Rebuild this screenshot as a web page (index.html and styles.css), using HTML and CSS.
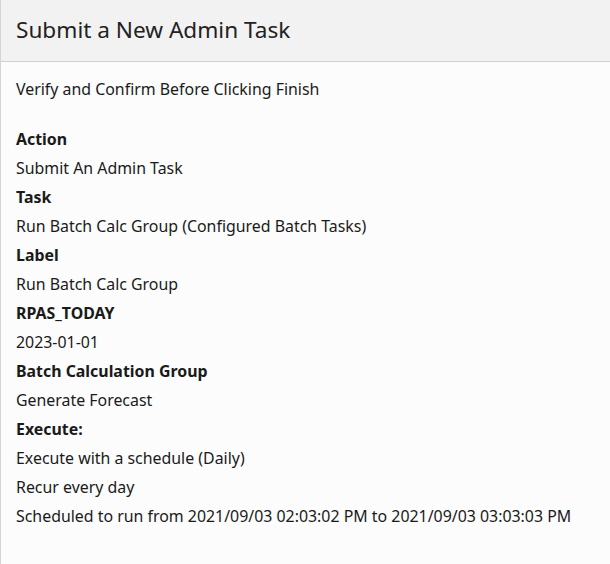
FILE: index.html
```html
<!DOCTYPE html>
<html>
<head>
<meta charset="utf-8">
<link rel="stylesheet" href="styles.css">
</head>
<body>
<div class="dialog">
  <div class="header"><h1 class="title">Submit a New Admin Task</h1></div>
  <div class="content">
    <p class="intro">Verify and Confirm Before Clicking Finish</p>
    <dl class="summary">
      <dt>Action</dt>
      <dd>Submit An Admin Task</dd>
      <dt>Task</dt>
      <dd>Run Batch Calc Group (Configured Batch Tasks)</dd>
      <dt>Label</dt>
      <dd>Run Batch Calc Group</dd>
      <dt>RPAS_TODAY</dt>
      <dd>2023-01-01</dd>
      <dt>Batch Calculation Group</dt>
      <dd>Generate Forecast</dd>
      <dt>Execute:</dt>
      <dd>Execute with a schedule (Daily)</dd>
      <dd>Recur every day</dd>
      <dd>Scheduled to run from 2021/09/03 02:03:02 PM to 2021/09/03 03:03:03 PM</dd>
    </dl>
  </div>
</div>
</body>
</html>
```
FILE: styles.css
```css
html, body {
  margin: 0;
  padding: 0;
  height: 100%;
}
body {
  font-family: "Noto Sans", "Open Sans", sans-serif;
  color: #1a1a1a;
  background: #fcfcfc;
}
.dialog {
  min-height: 100%;
  box-sizing: border-box;
  border-left: 1px solid #d4d4d4;
  background: #fcfcfc;
}
.header {
  height: 62px;
  box-sizing: border-box;
  background: #f2f2f2;
  border-bottom: 1px solid #cfcfcf;
  display: flex;
  align-items: center;
  padding: 0 15px 2px;
}
.title {
  margin: 0;
  font-size: 22.6px;
  font-weight: 400;
  color: #222;
}
.content {
  padding: 13px 15px 0;
  font-size: 15.9px;
}
.intro {
  margin: 0 0 21px;
  line-height: 29px;
}
.summary {
  margin: 0;
  line-height: 29px;
}
.summary dt {
  font-weight: 700;
}
.summary dd {
  margin: 0;
}
```
